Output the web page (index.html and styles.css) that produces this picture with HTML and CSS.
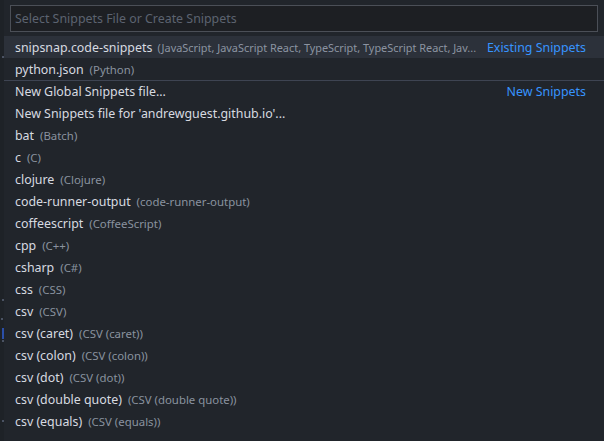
FILE: index.html
```html
<!DOCTYPE html>
<html>
<head>
<meta charset="utf-8">
<link rel="stylesheet" href="styles.css">
</head>
<body>
<div class="screen">
  <div class="gutter">
    <span class="mark m1"></span>
    <span class="mark m2"></span>
    <span class="mark m3"></span>
    <span class="mark blue"></span>
    <span class="mark m4"></span>
    <span class="mark m5"></span>
  </div>
  <div class="picker">
    <div class="input-wrap">
      <div class="input">Select Snippets File or Create Snippets</div>
    </div>
    <ul class="list">
      <li class="row selected"><span class="label">snipsnap.code-snippets</span><span class="desc grow">(JavaScript, JavaScript React, TypeScript, TypeScript React, Jav...</span><span class="group">Existing Snippets</span></li>
      <li class="row"><span class="label">python.json</span><span class="desc">(Python)</span></li>
      <li class="row sep"><span class="label">New Global Snippets file...</span><span class="spacer"></span><span class="group">New Snippets</span></li>
      <li class="row"><span class="label">New Snippets file for 'andrewguest.github.io'...</span></li>
      <li class="row"><span class="label">bat</span><span class="desc">(Batch)</span></li>
      <li class="row"><span class="label">c</span><span class="desc">(C)</span></li>
      <li class="row"><span class="label">clojure</span><span class="desc">(Clojure)</span></li>
      <li class="row"><span class="label">code-runner-output</span><span class="desc">(code-runner-output)</span></li>
      <li class="row"><span class="label">coffeescript</span><span class="desc">(CoffeeScript)</span></li>
      <li class="row"><span class="label">cpp</span><span class="desc">(C++)</span></li>
      <li class="row"><span class="label">csharp</span><span class="desc">(C#)</span></li>
      <li class="row"><span class="label">css</span><span class="desc">(CSS)</span></li>
      <li class="row"><span class="label">csv</span><span class="desc">(CSV)</span></li>
      <li class="row"><span class="label">csv (caret)</span><span class="desc">(CSV (caret))</span></li>
      <li class="row"><span class="label">csv (colon)</span><span class="desc">(CSV (colon))</span></li>
      <li class="row"><span class="label">csv (dot)</span><span class="desc">(CSV (dot))</span></li>
      <li class="row"><span class="label">csv (double quote)</span><span class="desc">(CSV (double quote))</span></li>
      <li class="row"><span class="label">csv (equals)</span><span class="desc">(CSV (equals))</span></li>
    </ul>
  </div>
</div>
</body>
</html>
```
FILE: styles.css
```css
* { box-sizing: border-box; }
html, body { margin: 0; padding: 0; background: #21252b; }
body { font-family: "Noto Sans", "Open Sans", sans-serif; font-size: 12.4px; color: #d7dae0; }
.screen { display: flex; width: 604px; height: 441px; overflow: hidden; }
.gutter { width: 4px; flex: none; position: relative; background: #1e2227; }
.mark { position: absolute; left: 2px; width: 2px; height: 2px; background: #4b5363; }
.m1 { top: 56px; }
.m2 { top: 299px; }
.m3 { top: 318px; left: 1px; }
.blue { top: 328px; left: 2px; width: 2px; height: 11px; background: #2b4fa8; }
.m4 { top: 340px; }
.m5 { top: 420px; }
.picker { flex: 1; display: flex; flex-direction: column; min-width: 0; }
.input-wrap { padding: 5px 6px 4px 6px; }
.input { height: 27px; border: 1px solid #4b4f57; background: #1d1f23; color: #5c6370; padding: 0 0 0 4px; line-height: 25px; white-space: nowrap; }
.list { list-style: none; margin: 0; padding: 0; }
.row { display: flex; align-items: center; height: 22px; padding: 0 18px 0 11px; white-space: nowrap; }
.row.selected { background: #2c313a; }
.row.sep { border-top: 1px solid #3e4452; }
.label { flex: none; }
.desc { font-size: 11.4px; color: #9da5b4; opacity: 0.85; margin-left: 6px; }
.desc.grow { flex: 1; min-width: 0; font-size: 10.9px; margin-left: 5px; overflow: hidden; }
.spacer { flex: 1; }
.group { flex: none; color: #3794ff; margin-left: 10px; }
```
